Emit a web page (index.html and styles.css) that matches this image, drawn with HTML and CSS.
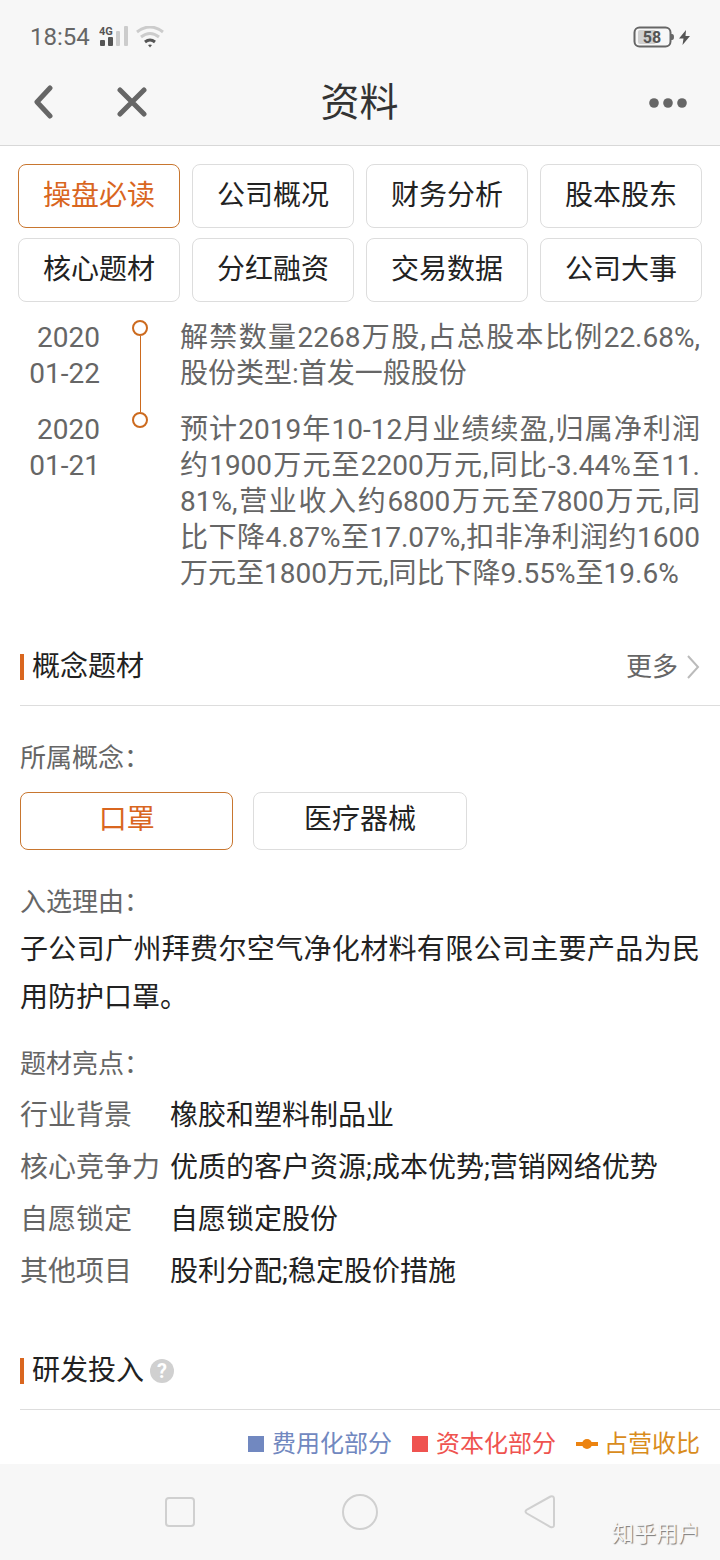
FILE: index.html
```html
<!DOCTYPE html>
<html lang="zh-CN">
<head>
    <meta charset="UTF-8">
    <meta name="viewport" content="width=device-width, initial-scale=1.0">
    <title>资料</title>
    <link rel="stylesheet" href="styles.css">
</head>
<body>

    <header class="top">
        <div class="status">
            <span class="time">18:54</span>
            <svg class="signal" width="30" height="22" viewBox="0 0 30 22">
                <text class="net" x="0" y="9">4G</text>
                <rect x="1" y="14" width="5" height="6" rx="1" fill="#555"/>
                <rect x="9" y="11" width="5" height="9" rx="1" fill="#555"/>
                <rect x="17" y="5" width="4" height="15" rx="1" fill="#ccc"/>
                <rect x="25" y="0" width="4" height="20" rx="1" fill="#ccc"/>
            </svg>
            <svg class="wifi" width="28" height="22" viewBox="0 0 28 22" fill="none">
                <path d="M1 6Q14-4 27 6" stroke="#ccc" stroke-width="3"/>
                <path d="M5 11Q14 4 23 11" stroke="#ccc" stroke-width="3"/>
                <path d="M9 16Q14 12 19 16" stroke="#555" stroke-width="3"/>
                <path d="M12 19Q14 18 16 19L14 21.500Z" fill="#555"/>
            </svg>
            <svg class="battery" width="58" height="22" viewBox="0 0 58 22">
                <rect x="5" y="4" width="18" height="14" rx="2" fill="#d0d0d0"/>
                <rect x="1.500" y="1.500" width="36" height="19" rx="5" fill="none" stroke="#666" stroke-width="2"/>
                <path d="M38 8h1q2 0 2 3t-2 3h-1z" fill="#666"/>
                <text class="level" x="19" y="17" text-anchor="middle">58</text>
                <path d="M53 4L46 12.500H50.500L49.500 19L57 10H52.500Z" fill="#555"/>
            </svg>
        </div>
        <div class="bar">
            <div class="bar-left">
                <button class="icon-btn" aria-label="返回">
                    <svg width="24" height="36" viewBox="0 0 24 36"><path d="M18 3L5 17L18 31" fill="none" stroke="#666" stroke-width="5" stroke-linecap="round" stroke-linejoin="round"/></svg>
                </button>
                <button class="icon-btn" aria-label="关闭">
                    <svg width="32" height="32" viewBox="0 0 32 32"><path d="M4 3L28 27M28 3L4 27" stroke="#666" stroke-width="5" stroke-linecap="round"/></svg>
                </button>
            </div>
            <h1>资料</h1>
            <button class="icon-btn more-btn" aria-label="更多操作">
                <svg width="38" height="12" viewBox="0 0 38 12" fill="#666"><circle cx="5" cy="6" r="4.800"/><circle cx="19" cy="6" r="4.800"/><circle cx="33" cy="6" r="4.800"/></svg>
            </button>
        </div>
    </header>

    <main>
        <nav class="tabs">
            <button class="box active">操盘必读</button>
            <button class="box">公司概况</button>
            <button class="box">财务分析</button>
            <button class="box">股本股东</button>
            <button class="box">核心题材</button>
            <button class="box">分红融资</button>
            <button class="box">交易数据</button>
            <button class="box">公司大事</button>
        </nav>

        <ol class="timeline">
            <li>
                <time datetime="2020-01-22">2020<br>01-22</time>
                <span class="track"><i class="dot"></i></span>
                <p>解禁数量2268万股,占总股本比例22.68%,股份类型:首发一般股份</p>
            </li>
            <li>
                <time datetime="2020-01-21">2020<br>01-21</time>
                <span class="track"><i class="dot"></i></span>
                <p>预计2019年10-12月业绩续盈,归属净利润约1900万元至2200万元,同比-3.44%至11.81%,营业收入约6800万元至7800万元,同比下降4.87%至17.07%,扣非净利润约1600万元至1800万元,同比下降9.55%至19.6%</p>
            </li>
        </ol>

        <section>
            <div class="section-head">
                <h2>概念题材</h2>
                <a class="more" href="#">更多
                    <svg width="14" height="26" viewBox="0 0 14 26"><path d="M2 2L12 13L2 24" fill="none" stroke="#bbb" stroke-width="2"/></svg>
                </a>
            </div>
            <div class="section-body">
                <h3>所属概念：</h3>
                <div class="chips">
                    <button class="box active">口罩</button>
                    <button class="box">医疗器械</button>
                </div>
                <h3>入选理由：</h3>
                <p class="reason">子公司广州拜费尔空气净化材料有限公司主要产品为民用防护口罩。</p>
                <h3>题材亮点：</h3>
                <dl class="points">
                    <dt>行业背景</dt><dd>橡胶和塑料制品业</dd>
                    <dt>核心竞争力</dt><dd>优质的客户资源;成本优势;营销网络优势</dd>
                    <dt>自愿锁定</dt><dd>自愿锁定股份</dd>
                    <dt>其他项目</dt><dd>股利分配;稳定股价措施</dd>
                </dl>
            </div>
        </section>

        <section>
            <div class="section-head">
                <h2>研发投入</h2>
                <button class="help" aria-label="说明">?</button>
            </div>
            <ul class="legend">
                <li class="expense"><i class="square"></i>费用化部分</li>
                <li class="capital"><i class="square"></i>资本化部分</li>
                <li class="ratio">
                    <svg width="22" height="12" viewBox="0 0 22 12" fill="#ec8310"><rect y="4" width="22" height="4"/><circle cx="11" cy="6" r="5"/></svg>占营收比
                </li>
            </ul>
        </section>
    </main>

    <footer class="sysnav">
        <button class="icon-btn" aria-label="最近任务">
            <svg width="36" height="36" viewBox="0 0 36 36"><rect x="4" y="4" width="28" height="28" rx="3" fill="none" stroke="#d0d0d0" stroke-width="2"/></svg>
        </button>
        <button class="icon-btn" aria-label="主页">
            <svg width="36" height="36" viewBox="0 0 36 36"><circle cx="18" cy="18" r="17" fill="none" stroke="#d0d0d0" stroke-width="2"/></svg>
        </button>
        <button class="icon-btn" aria-label="后退">
            <svg width="36" height="36" viewBox="0 0 36 36"><path d="M28.500 2.500L5 15.500Q2 17.500 5 19.500L28.500 33Q32 34 32 31V5Q32 1.500 28.500 2.500Z" fill="none" stroke="#d0d0d0" stroke-width="2"/></svg>
        </button>
        <span class="watermark">知乎用户</span>
    </footer>

</body>
</html>
```
FILE: styles.css
```css
* {
    box-sizing: border-box;
    margin: 0;
    padding: 0;
}
body {
    display: flex;
    flex-direction: column;
    min-height: 100vh;
    font-family: Roboto, "Noto Sans CJK SC", sans-serif;
    font-size: 28px;
    line-height: 36px;
    color: #222;
    background-color: #fff;
}
button {
    font: inherit;
    color: inherit;
    background: none;
    border: none;
    cursor: pointer;
}
svg {
    display: block;
}
h1, h2, h3 {
    font-weight: 400;
}
ol, ul {
    list-style: none;
}

/* status bar and title */
.top {
    background-color: #f7f7f7;
    border-bottom: 1px solid #d8d8d8;
}
.status {
    display: flex;
    align-items: center;
    height: 60px;
    padding: 14px 29px 0 30px;
    color: #666;
}
.time {
    font-size: 24px;
}
.signal {
    margin-left: 9px;
}
.wifi {
    margin-left: 7px;
}
.battery {
    margin-left: auto;
}
.net {
    font-size: 11px;
    font-weight: 700;
    fill: #555;
}
.level {
    font-size: 16px;
    font-weight: 700;
    fill: #555;
}
.bar {
    display: grid;
    grid-template-columns: 1fr auto 1fr;
    align-items: center;
    height: 85px;
    padding: 0 33px 0 32px;
}
.bar-left {
    display: flex;
    align-items: center;
    gap: 60px;
}
.bar h1 {
    font-size: 39px;
    line-height: 56px;
    color: #333;
}
.icon-btn {
    display: flex;
}
.more-btn {
    justify-self: end;
}

/* tabs */
main {
    flex: 1;
}
.tabs {
    display: grid;
    grid-template-columns: repeat(4, 1fr);
    gap: 10px 12px;
    padding: 18px 18px 0;
}
.box {
    height: 64px;
    border: 1px solid #ddd;
    border-radius: 8px;
}
.box.active {
    color: #d9661f;
    border-color: #c8762f;
}

/* timeline */
.timeline {
    padding: 18px 20px 0;
    color: #666;
}
.timeline li {
    display: grid;
    grid-template-columns: 80px 80px 1fr;
}
.timeline time {
    text-align: right;
}
.timeline p {
    padding-bottom: 20px;
    text-align: justify;
    word-break: break-all;
}
.track {
    display: flex;
    flex-direction: column;
    align-items: center;
}
.dot {
    width: 16px;
    height: 16px;
    border: 2px solid #cc6a1e;
    border-radius: 50%;
}
.timeline li:not(:last-child) .track::after {
    content: "";
    flex: 1;
    width: 1px;
    background-color: #cc6a1e;
}

/* sections */
.section-head {
    display: flex;
    align-items: center;
    height: 78px;
    margin: 16px 0 0 20px;
    padding-right: 20px;
    border-bottom: 1px solid #ddd;
}
.section-head h2 {
    display: flex;
    align-items: center;
    gap: 8px;
    font-size: 28px;
}
.section-head h2::before {
    content: "";
    width: 4px;
    height: 26px;
    background-color: #d9661f;
}
.more {
    display: flex;
    align-items: center;
    gap: 8px;
    margin-left: auto;
    font-size: 26px;
    color: #666;
    text-decoration: none;
}
.help {
    width: 24px;
    height: 24px;
    margin-left: 6px;
    border-radius: 50%;
    background-color: #d0d0d0;
    color: #fff;
    font-size: 20px;
    font-weight: 700;
    line-height: 24px;
}
.section-body {
    padding: 34px 20px 18px;
}
.section-body h3 {
    font-size: 26px;
    color: #666;
}
.chips {
    display: grid;
    grid-template-columns: repeat(3, 1fr);
    gap: 20px;
    padding: 16px 0 34px;
}
.chips .box {
    height: 58px;
    padding-bottom: 2px;
}
.reason {
    margin: 6px 0 24px;
    line-height: 48px;
    text-align: justify;
}
.points {
    display: grid;
    grid-template-columns: 140px 1fr;
    column-gap: 10px;
    padding-top: 8px;
    line-height: 52px;
}
.points dt {
    color: #666;
}

/* chart legend */
.legend {
    display: flex;
    justify-content: flex-end;
    gap: 20px;
    padding: 16px 20px 2px;
    font-size: 24px;
}
.legend li {
    display: flex;
    align-items: center;
    gap: 8px;
}
.square {
    width: 16px;
    height: 16px;
    background-color: currentColor;
}
.expense {
    color: #7188c0;
}
.capital {
    color: #ef5350;
}
.legend .ratio {
    gap: 6px;
    color: #d98c1c;
}

/* system navigation */
.sysnav {
    position: relative;
    display: flex;
    align-items: center;
    justify-content: center;
    gap: 144px;
    height: 96px;
    background-color: #f7f7f7;
}
.watermark {
    position: absolute;
    right: 20px;
    bottom: 8px;
    font-size: 22px;
    color: #f7f7f7;
    text-shadow: 1px 1px 1px #777;
}
```
